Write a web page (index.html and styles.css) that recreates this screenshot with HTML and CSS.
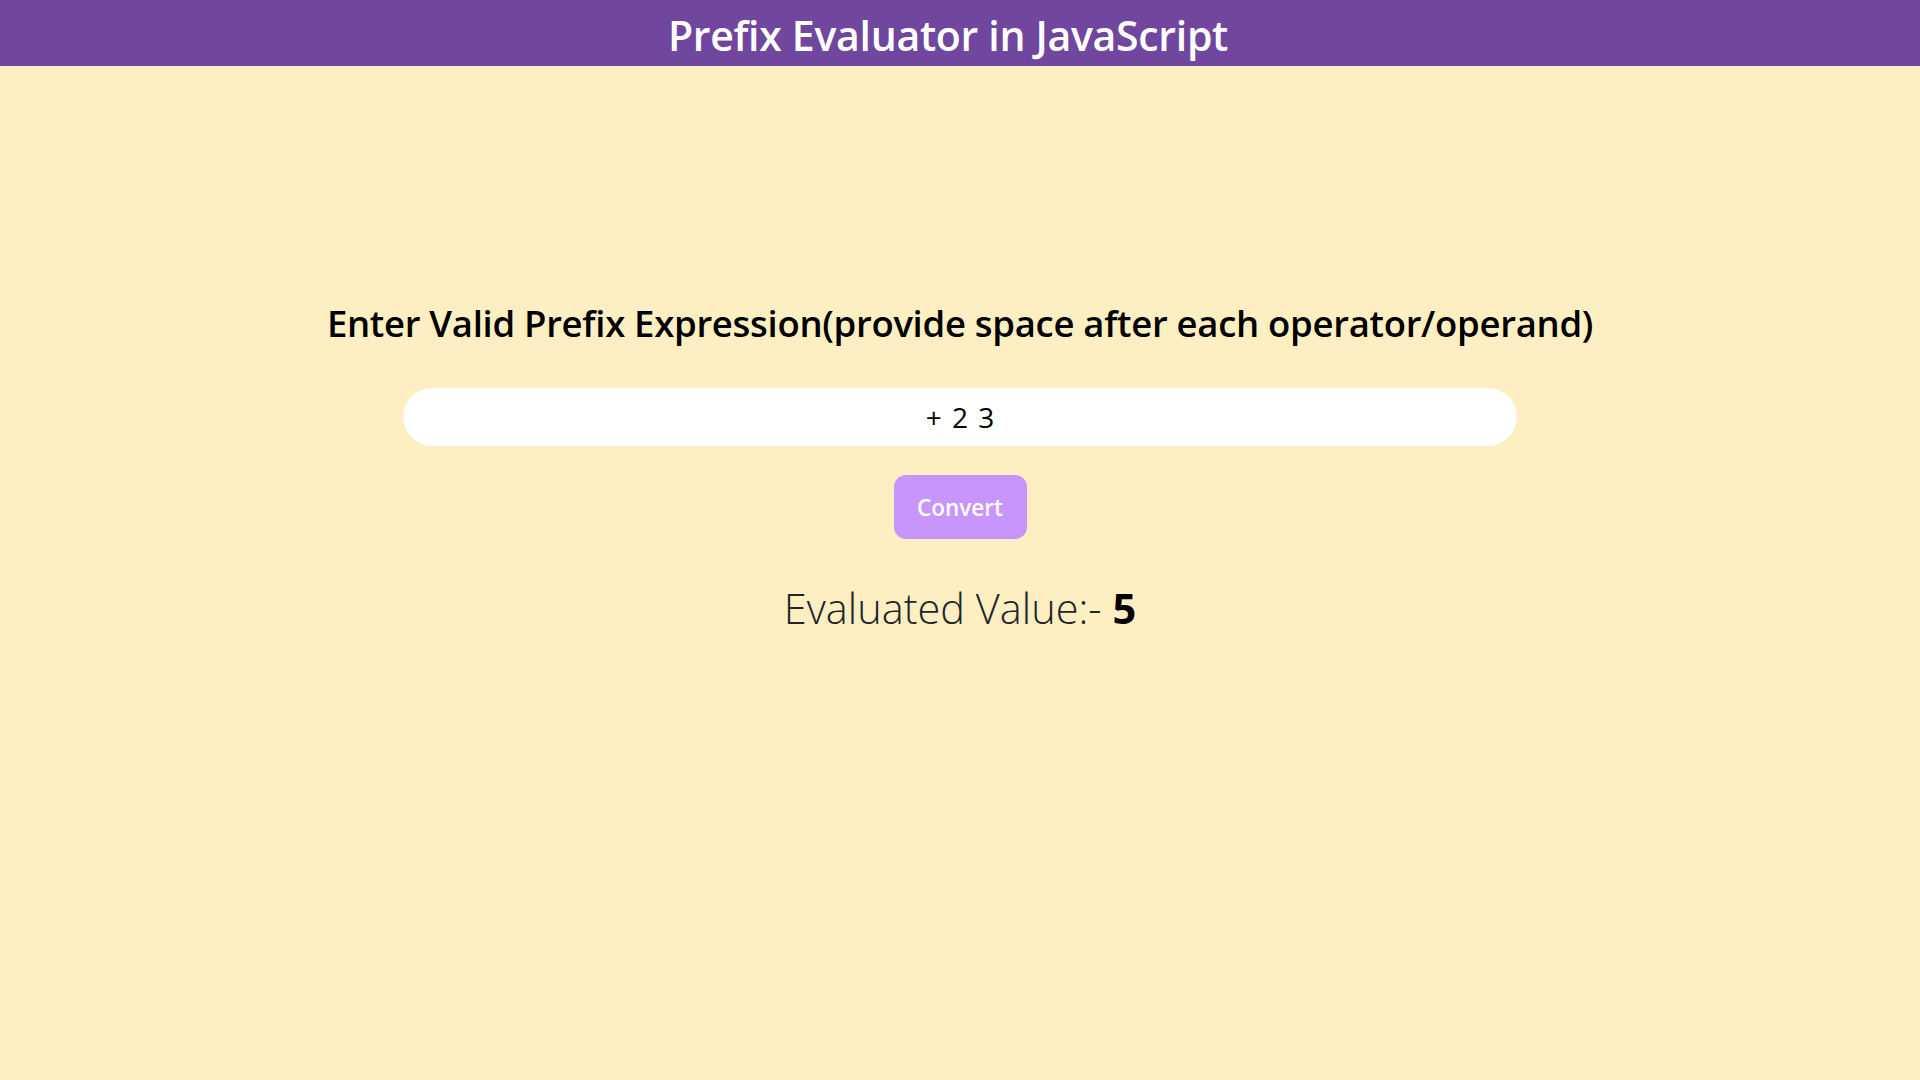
FILE: index.html
```html
<!DOCTYPE html>
<html lang="en">
<head>
<meta charset="utf-8">
<title>Prefix Evaluator in JavaScript</title>
<link rel="stylesheet" href="styles.css">
</head>
<body>
<header class="topbar">
  <h1 class="title">Prefix Evaluator in JavaScript</h1>
</header>
<main class="content">
  <h2 class="prompt">Enter Valid Prefix Expression(provide space after each operator/operand)</h2>
  <input class="expr" type="text" value="+ 2 3">
  <button class="convert" type="button">Convert</button>
  <p class="result">Evaluated Value:- <strong class="value">5</strong></p>
</main>
</body>
</html>
```
FILE: styles.css
```css
* { box-sizing: border-box; }
html, body { margin: 0; padding: 0; }
body {
  background: #feefc3;
  font-family: "Open Sans", "Noto Sans", sans-serif;
  color: #212529;
  min-height: 1080px;
}
.topbar {
  background: #70469e;
  height: 66px;
  display: flex;
  align-items: center;
  justify-content: center;
  padding-right: 24px;
  padding-top: 4px;
}
.title {
  margin: 0;
  color: #ffffff;
  font-size: 41px;
  font-weight: 600;
  line-height: 62px;
  letter-spacing: -0.3px;
}
.content {
  display: flex;
  flex-direction: column;
  align-items: center;
  padding-top: 233px;
}
.prompt {
  margin: 0;
  color: #000;
  font-size: 36.5px;
  font-weight: 600;
  line-height: 48px;
  letter-spacing: -0.3px;
}
.expr {
  margin-top: 41px;
  width: 1114px;
  height: 58px;
  border: none;
  border-radius: 29px;
  background: #fff;
  text-align: center;
  font-family: "Open Sans", sans-serif;
  font-size: 28px;
  word-spacing: 3px;
  color: #000;
  outline: none;
}
.convert {
  margin-top: 29px;
  width: 133px;
  height: 64px;
  border: none;
  border-radius: 12px;
  background: #c795fc;
  color: #fff;
  font-family: "Open Sans", sans-serif;
  font-size: 22.5px;
  font-weight: 600;
}
.result {
  margin: 41px 0 0;
  font-size: 41.5px;
  font-weight: 300;
  line-height: 56px;
}
.value {
  color: #000;
  font-weight: 700;
}
```
